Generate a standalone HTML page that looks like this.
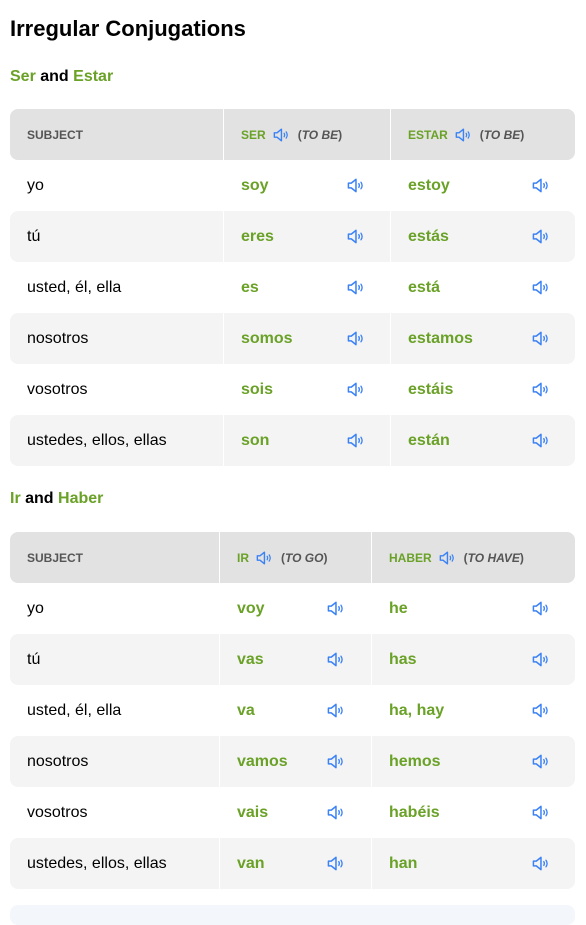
<!DOCTYPE html>
<html><head><style>
body{margin:0;background:#fff;font-family:"Liberation Sans",Arial,sans-serif;color:#111;width:586px;height:915px;overflow:hidden;position:relative}
h1{position:absolute;left:10px;top:16px;margin:0;font-size:22px;font-weight:bold;color:#000}
h2{position:absolute;left:10px;margin:0;font-size:16px;font-weight:bold;color:#000}
.g{color:#6aa127}
.t{position:absolute;left:10px;width:565px}
.r{display:flex;height:51px;border-radius:8px;overflow:hidden}
.r.gray{background:#f4f4f4}
.r.hd{background:#e2e2e2}
.c{display:flex;align-items:center;box-sizing:border-box;padding-left:17px;font-size:16px;position:relative;color:#000}
.c+.c{border-left:1.5px solid #fff}
.hd .c{font-size:12px;font-weight:bold;color:#555}
.hd .c .g{color:#6aa127}
.v{color:#6aa127;font-weight:bold}
.ic{position:absolute;top:17px}
.hic{display:inline-block;margin:0 8px 0 6px;vertical-align:middle}
i{font-style:italic}
.foot{position:absolute;left:10px;top:905px;width:565px;height:20px;background:#f3f7fb;border-radius:8px}
</style></head><body>
<svg width="0" height="0" style="position:absolute"><defs><symbol id="sp" viewBox="0 0 20 18"><path d="M2.5 6.5h3l5-4v13l-5-4h-3z" fill="none" stroke="#3b82f6" stroke-width="1.6" stroke-linejoin="round"/><path d="M13.5 7q1.2 2 0 4M15.8 5.5q2.4 3.5 0 7" fill="none" stroke="#3b82f6" stroke-width="1.4" stroke-linecap="round"/></symbol></defs></svg>
<h1>Irregular Conjugations</h1>
<h2 style="top:68px"><span class="g">Ser</span> and <span class="g">Estar</span></h2>
<div class="t" style="top:109px">
<div class="r hd"><div class="c" style="width:213px">SUBJECT</div><div class="c" style="width:167px"><span class="g">SER</span><svg class="hic" width="18" height="16"><use href="#sp"/></svg>(<i>TO BE</i>)</div><div class="c" style="width:185px"><span class="g">ESTAR</span><svg class="hic" width="18" height="16"><use href="#sp"/></svg>(<i>TO BE</i>)</div></div>
<div class="r"><div class="c" style="width:213px">yo</div><div class="c" style="width:167px"><span class="v">soy</span><svg class="ic" style="left:122px" width="19" height="17"><use href="#sp"/></svg></div><div class="c" style="width:185px"><span class="v">estoy</span><svg class="ic" style="left:140px" width="19" height="17"><use href="#sp"/></svg></div></div>
<div class="r gray"><div class="c" style="width:213px">tú</div><div class="c" style="width:167px"><span class="v">eres</span><svg class="ic" style="left:122px" width="19" height="17"><use href="#sp"/></svg></div><div class="c" style="width:185px"><span class="v">estás</span><svg class="ic" style="left:140px" width="19" height="17"><use href="#sp"/></svg></div></div>
<div class="r"><div class="c" style="width:213px">usted, él, ella</div><div class="c" style="width:167px"><span class="v">es</span><svg class="ic" style="left:122px" width="19" height="17"><use href="#sp"/></svg></div><div class="c" style="width:185px"><span class="v">está</span><svg class="ic" style="left:140px" width="19" height="17"><use href="#sp"/></svg></div></div>
<div class="r gray"><div class="c" style="width:213px">nosotros</div><div class="c" style="width:167px"><span class="v">somos</span><svg class="ic" style="left:122px" width="19" height="17"><use href="#sp"/></svg></div><div class="c" style="width:185px"><span class="v">estamos</span><svg class="ic" style="left:140px" width="19" height="17"><use href="#sp"/></svg></div></div>
<div class="r"><div class="c" style="width:213px">vosotros</div><div class="c" style="width:167px"><span class="v">sois</span><svg class="ic" style="left:122px" width="19" height="17"><use href="#sp"/></svg></div><div class="c" style="width:185px"><span class="v">estáis</span><svg class="ic" style="left:140px" width="19" height="17"><use href="#sp"/></svg></div></div>
<div class="r gray"><div class="c" style="width:213px">ustedes, ellos, ellas</div><div class="c" style="width:167px"><span class="v">son</span><svg class="ic" style="left:122px" width="19" height="17"><use href="#sp"/></svg></div><div class="c" style="width:185px"><span class="v">están</span><svg class="ic" style="left:140px" width="19" height="17"><use href="#sp"/></svg></div></div>
</div>
<h2 style="top:490px"><span class="g">Ir</span> and <span class="g">Haber</span></h2>
<div class="t" style="top:532px">
<div class="r hd"><div class="c" style="width:209px">SUBJECT</div><div class="c" style="width:152px"><span class="g">IR</span><svg class="hic" width="18" height="16"><use href="#sp"/></svg>(<i>TO GO</i>)</div><div class="c" style="width:204px"><span class="g">HABER</span><svg class="hic" width="18" height="16"><use href="#sp"/></svg>(<i>TO HAVE</i>)</div></div>
<div class="r"><div class="c" style="width:209px">yo</div><div class="c" style="width:152px"><span class="v">voy</span><svg class="ic" style="left:106px" width="19" height="17"><use href="#sp"/></svg></div><div class="c" style="width:204px"><span class="v">he</span><svg class="ic" style="left:159px" width="19" height="17"><use href="#sp"/></svg></div></div>
<div class="r gray"><div class="c" style="width:209px">tú</div><div class="c" style="width:152px"><span class="v">vas</span><svg class="ic" style="left:106px" width="19" height="17"><use href="#sp"/></svg></div><div class="c" style="width:204px"><span class="v">has</span><svg class="ic" style="left:159px" width="19" height="17"><use href="#sp"/></svg></div></div>
<div class="r"><div class="c" style="width:209px">usted, él, ella</div><div class="c" style="width:152px"><span class="v">va</span><svg class="ic" style="left:106px" width="19" height="17"><use href="#sp"/></svg></div><div class="c" style="width:204px"><span class="v">ha, hay</span><svg class="ic" style="left:159px" width="19" height="17"><use href="#sp"/></svg></div></div>
<div class="r gray"><div class="c" style="width:209px">nosotros</div><div class="c" style="width:152px"><span class="v">vamos</span><svg class="ic" style="left:106px" width="19" height="17"><use href="#sp"/></svg></div><div class="c" style="width:204px"><span class="v">hemos</span><svg class="ic" style="left:159px" width="19" height="17"><use href="#sp"/></svg></div></div>
<div class="r"><div class="c" style="width:209px">vosotros</div><div class="c" style="width:152px"><span class="v">vais</span><svg class="ic" style="left:106px" width="19" height="17"><use href="#sp"/></svg></div><div class="c" style="width:204px"><span class="v">habéis</span><svg class="ic" style="left:159px" width="19" height="17"><use href="#sp"/></svg></div></div>
<div class="r gray"><div class="c" style="width:209px">ustedes, ellos, ellas</div><div class="c" style="width:152px"><span class="v">van</span><svg class="ic" style="left:106px" width="19" height="17"><use href="#sp"/></svg></div><div class="c" style="width:204px"><span class="v">han</span><svg class="ic" style="left:159px" width="19" height="17"><use href="#sp"/></svg></div></div>
</div>
<div class="foot"></div>
</body></html>
